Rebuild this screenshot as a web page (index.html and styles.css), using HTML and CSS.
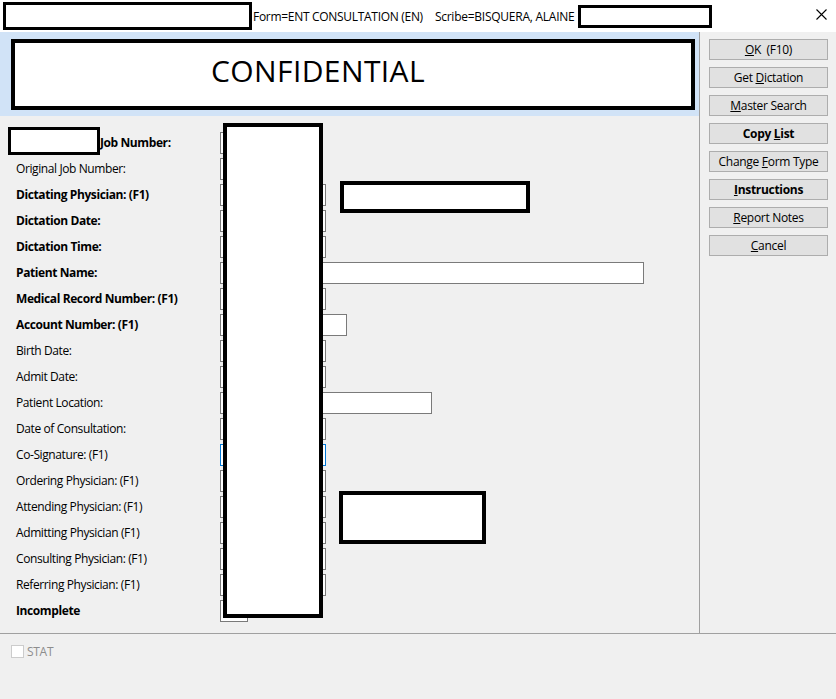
FILE: index.html
```html
<!DOCTYPE html>
<html lang="en">
    <head>
        <meta charset="UTF-8">
        <meta name="viewport" content="width=device-width,initial-scale=1.0">
        <title>ENT Consultation</title>
        <link rel="stylesheet" href="styles.css">
    </head>
    <body>
        <div class="window">
            <div class="titlebar">
                <div class="redact title-redact1"></div>
                <span class="form-name">Form=ENT CONSULTATION (EN)</span>
                <span class="scribe">Scribe=BISQUERA, ALAINE</span>
                <div class="redact title-redact2"></div>
                <span class="close">
                    <svg width="11" height="11" viewBox="0 0 11 11"><path d="M0.5 0.5 L10.5 10.5 M10.5 0.5 L0.5 10.5" stroke="#000" stroke-width="1.1" fill="none"/></svg>
                </span>
            </div>
            <div class="main">
                <div class="left">
                    <div class="band">
                        <div class="confidential">CONFIDENTIAL</div>
                    </div>
                    <div class="form">
                        <div class="row"><span class="label bold job">Job Number:</span><span class="field w-hidden"></span></div>
                        <div class="row"><span class="label">Original Job Number:</span><span class="field w-hidden"></span></div>
                        <div class="row"><span class="label bold">Dictating Physician: (F1)</span><span class="field"></span></div>
                        <div class="row"><span class="label bold">Dictation Date:</span><span class="field"></span></div>
                        <div class="row"><span class="label bold">Dictation Time:</span><span class="field"></span></div>
                        <div class="row"><span class="label bold">Patient Name:</span><span class="field w-name"></span></div>
                        <div class="row"><span class="label bold">Medical Record Number: (F1)</span><span class="field"></span></div>
                        <div class="row"><span class="label bold">Account Number: (F1)</span><span class="field w-account"></span></div>
                        <div class="row"><span class="label">Birth Date:</span><span class="field"></span></div>
                        <div class="row"><span class="label">Admit Date:</span><span class="field"></span></div>
                        <div class="row"><span class="label">Patient Location:</span><span class="field w-location"></span></div>
                        <div class="row"><span class="label">Date of Consultation:</span><span class="field"></span></div>
                        <div class="row"><span class="label">Co-Signature: (F1)</span><span class="field focused"></span></div>
                        <div class="row"><span class="label">Ordering Physician: (F1)</span><span class="field"></span></div>
                        <div class="row"><span class="label">Attending Physician: (F1)</span><span class="field"></span></div>
                        <div class="row"><span class="label">Admitting Physician (F1)</span><span class="field"></span></div>
                        <div class="row"><span class="label">Consulting Physician: (F1)</span><span class="field"></span></div>
                        <div class="row"><span class="label">Referring Physician: (F1)</span><span class="field"></span></div>
                        <div class="row"><span class="label bold">Incomplete</span><span class="field w-check"></span></div>

                        <div class="redact redact-job"></div>
                        <div class="redact redact-column"></div>
                        <div class="redact redact-dictating"></div>
                        <div class="redact redact-attending"></div>
                    </div>
                </div>
                <div class="side">
                    <button class="btn"><u>O</u>K&nbsp; (F10)</button>
                    <button class="btn">Get <u>D</u>ictation</button>
                    <button class="btn"><u>M</u>aster Search</button>
                    <button class="btn bold">Copy <u>L</u>ist</button>
                    <button class="btn">Change <u>F</u>orm Type</button>
                    <button class="btn bold"><u>I</u>nstructions</button>
                    <button class="btn"><u>R</u>eport Notes</button>
                    <button class="btn"><u>C</u>ancel</button>
                </div>
            </div>
            <div class="footer">
                <span class="check"></span><span class="stat">STAT</span>
            </div>
        </div>
    </body>
</html>
```

FILE: styles.css
```css
*{
    margin: 0;
    padding: 0;
    box-sizing: border-box;
}
body{
    background-color: #f0f0f0;
    font-family: "Open Sans", "Noto Sans", sans-serif;
    font-size: 12px;
    color: #000;
}
.window{
    width: 836px;
    height: 699px;
    display: flex;
    flex-direction: column;
    overflow: hidden;
}
.redact{
    background-color: #fff;
    border: 3px solid #000;
}
.titlebar{
    height: 32px;
    background-color: #fff;
    display: flex;
    align-items: center;
    position: relative;
}
.title-redact1{
    width: 249px;
    height: 28px;
    margin-left: 3px;
    margin-right: 1px;
}
.form-name{
    letter-spacing: -0.3px;
}
.scribe{
    margin-left: 12px;
    letter-spacing: -0.25px;
}
.title-redact2{
    width: 134px;
    height: 23px;
    margin-left: 4px;
}
.close{
    position: absolute;
    right: 9px;
    top: 9px;
    width: 11px;
    height: 11px;
    display: flex;
}
.main{
    height: 602px;
    display: flex;
    border-bottom: 1px solid #a0a0a0;
}
.left{
    width: 699px;
}
.band{
    height: 84px;
    background-color: #d1e3f7;
    padding: 7px 4px 6px 11px;
}
.confidential{
    height: 71px;
    width: 684px;
    background-color: #fff;
    border: 4px solid #000;
    font-size: 30px;
    line-height: 56px;
    padding-left: 196px;
    letter-spacing: 0.4px;
}
.form{
    position: relative;
    padding: 14px 0 0 16px;
}
.row{
    height: 26px;
    display: grid;
    grid-template-columns: 204px auto;
    align-items: center;
    justify-items: start;
}
.label{
    letter-spacing: -0.4px;
    white-space: nowrap;
    padding-bottom: 2px;
}
.bold{
    font-weight: bold;
}
.job{
    padding-left: 84px;
}
.field{
    height: 22px;
    width: 106px;
    background-color: #fff;
    border: 1px solid #7a7a7a;
}
.field.focused{
    border-color: #0078d7;
}
.w-hidden{
    width: 100px;
}
.w-name{
    width: 424px;
}
.w-account{
    width: 127px;
}
.w-location{
    width: 212px;
}
.w-check{
    width: 28px;
}
.redact-job{
    position: absolute;
    left: 8px;
    top: 11px;
    width: 92px;
    height: 28px;
}
.redact-column{
    position: absolute;
    left: 223px;
    top: 7px;
    width: 100px;
    height: 495px;
    border-width: 4px;
}
.redact-dictating{
    position: absolute;
    left: 340px;
    top: 65px;
    width: 190px;
    height: 32px;
    border-width: 4px;
}
.redact-attending{
    position: absolute;
    left: 339px;
    top: 375px;
    width: 147px;
    height: 53px;
    border-width: 4px;
}
.side{
    flex: 1;
    border-left: 1px solid #a0a0a0;
    padding: 7px 0 0 9px;
    display: flex;
    flex-direction: column;
    gap: 7px;
}
.btn{
    width: 119px;
    height: 21px;
    background-color: #e1e1e1;
    border: 1px solid #adadad;
    font-family: inherit;
    font-size: 12px;
    letter-spacing: -0.3px;
    color: #000;
}
.footer{
    flex: 1;
    display: flex;
    align-items: flex-start;
    padding: 11px 0 0 11px;
}
.check{
    width: 13px;
    height: 13px;
    background-color: #fff;
    border: 1px solid #cccccc;
    margin-right: 3px;
}
.stat{
    color: #8d8d8d;
    line-height: 13px;
    letter-spacing: -0.3px;
}
```
